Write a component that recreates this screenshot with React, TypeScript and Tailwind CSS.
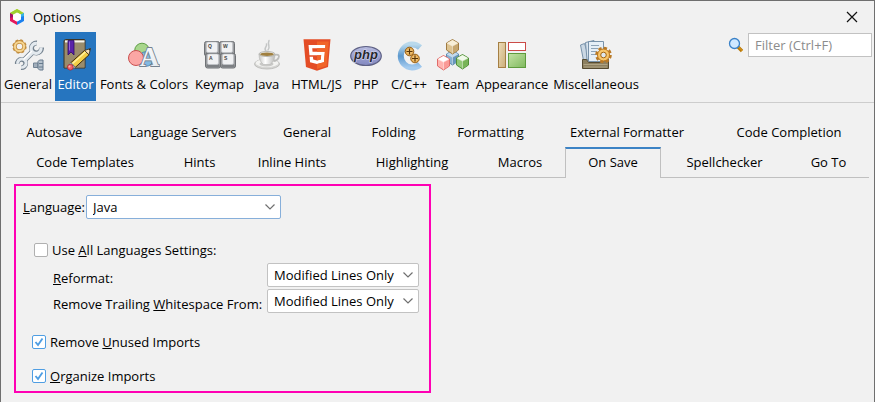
import { useState, type ReactNode } from "react";
import { FaHtml5 } from "react-icons/fa6";

function Logo() {
  return (
    <svg viewBox="0 0 16 16" className="size-4">
      <path d="M8 0 15 4v8L8 16 1 12V4Z" fill="#fff" />
      <path d="M1 12V4l3 1.700v4.600L8 12.500V16Z" fill="#e4195c" />
      <path d="M1 4 8 0l3.500 2L5 6Z" fill="#b5d82b" />
      <path d="m8 0 7 4-3 1.700L8 3.500 4 5.700 1 4Z" fill="#9fd02f" />
      <path d="M15 4v8l-7 4v-3.500l4-2.200V5.700Z" fill="#1b80ee" />
      <path d="M1 4v5l3-1V5.700Z" fill="#a01468" />
      <path d="m12 5.700 3-1.700v3l-3 1Z" fill="#35b3e4" />
      <path d="m8 3.500 4 2.200v4.600l-4 2.200-4-2.200V5.700Z" fill="#fff" />
    </svg>
  );
}

function GeneralIcon() {
  return (
    <svg viewBox="0 0 32 32" className="size-8">
      <circle cx="7.500" cy="7.500" r="6.200" fill="none" stroke="#c4934a" strokeWidth="2" strokeDasharray="2.700 2.170" />
      <circle cx="7.500" cy="7.500" r="4.600" fill="none" stroke="#c28c3c" strokeWidth="3.600" />
      <circle cx="7.500" cy="7.500" r="4.600" fill="none" stroke="#f6d591" strokeWidth="2" />
      <g fill="none" stroke="#74828f">
        <path d="M29.500 8.600A5 5 0 1 1 24.900 4" strokeWidth="5" />
        <path d="M5.300 24.900A4.200 4.200 0 1 1 9.100 28.700" strokeWidth="4.800" />
        <path d="m21 12.500-8.500 8.500" strokeWidth="5.800" />
      </g>
      <g fill="none" stroke="#e3e9ee">
        <path d="M29 8.600A5 5 0 1 1 24.900 4.500" strokeWidth="3.200" />
        <path d="M5.800 24.900A4.200 4.200 0 1 1 9.100 28.200" strokeWidth="3" />
        <path d="m21 12.500-8.500 8.500" strokeWidth="4" />
      </g>
      <path d="m20 12-8.500 8.500" stroke="#fff" strokeWidth="1.300" />
      <path d="M21.500 24h4.500v4.500h-4.500Z" fill="#c4ced8" stroke="#708293" />
      <path d="M23 24v4.500M25 24v4.500" stroke="#708293" strokeWidth=".8" />
      <path d="m26 22.500 1.500-1.500H31v10h-3.500L26 29.500Z" fill="#b6c2cd" stroke="#65798c" />
      <path d="M27 24.500h4M27 28h4" stroke="#65798c" />
    </svg>
  );
}

function EditorIcon() {
  return (
    <svg viewBox="0 0 32 32" className="size-8">
      <path d="M4 1.500 5.500.5h19l.5 1V29H4Z" fill="#8d8062" stroke="#3e3424" />
      <path d="M5 1.500h19.500v2H5Z" fill="#f7f5ee" />
      <path d="M5 4h19.500v24.500H5Z" fill="#9a8c6c" />
      <path d="M4.500 4v24.500" stroke="#6a5d43" />
      <path d="M8 1.500h6V16l-3-3-3 3Z" fill="#5a22a8" stroke="#2e0b68" strokeWidth=".8" />
      <path d="M9.500 2.500v9" stroke="#9a66dc" />
      <path d="m10.500 24 14-12.500 4.500 4.300-13.800 12.700Z" fill="#f3cf47" stroke="#3e2c0e" />
      <path d="m12 25 14-12.500" stroke="#fff1a0" strokeWidth="1.500" />
      <path d="m24.500 11.500 6-2-1.500 6.300Z" fill="#f7dfb4" stroke="#3e2c0e" strokeWidth=".8" />
      <path d="m28.500 10.200 2-.7-.6 2.200Z" fill="#222" />
      <path d="m9.300 25 1.600-1.400 4.500 4.600-1.600 1.400Z" fill="#bccbda" stroke="#5b6976" strokeWidth=".8" />
      <circle cx="10.300" cy="28.200" r="2.900" fill="#f0636b" stroke="#a72834" strokeWidth=".8" />
      <circle cx="9.500" cy="27.500" r="1" fill="#ffb7b8" />
    </svg>
  );
}

function FontsIcon() {
  return (
    <svg viewBox="0 0 32 32" className="size-8">
      <defs>
        <linearGradient id="fontFace" x1="0" y1="0" x2="1" y2="1">
          <stop offset="0" stopColor="#fff" />
          <stop offset="1" stopColor="#e2e8ee" />
        </linearGradient>
      </defs>
      <circle cx="14" cy="11.500" r="7.300" fill="#a8d68c" stroke="#5f9e47" />
      <circle cx="18" cy="20" r="7.300" fill="#82b9e2" stroke="#4c88b5" />
      <circle cx="8" cy="19" r="7.500" fill="#fba6a4" stroke="#c9504f" />
      <text x="21.500" y="26.500" textAnchor="middle" fontFamily="Liberation Serif, serif" fontWeight="700" fontSize="27" fill="url(#fontFace)" stroke="#75828f" strokeWidth="1.800" paintOrder="stroke">
        A
      </text>
    </svg>
  );
}

function Key({ x, y, label }: { x: number; y: number; label: string }) {
  return (
    <g transform={`translate(${x} ${y})`}>
      <rect x=".5" y=".5" width="15" height="14.500" rx="2" fill="#9c9ea1" stroke="#6f7276" />
      <path d="M1.500 12 3.500 10.500h9l2 1.500v2h-13Z" fill="#7d8084" />
      <rect x="2.500" y="1" width="11" height="10.500" rx="1.500" fill="#f0f1f3" stroke="#c2c4c8" strokeWidth=".7" />
      <text x="4" y="7" fontFamily="Liberation Sans, sans-serif" fontWeight="700" fontSize="5" fill="#444">
        {label}
      </text>
    </g>
  );
}

function KeymapIcon() {
  return (
    <svg viewBox="0 0 32 32" className="size-8">
      <Key x={0} y={2} label="Q" />
      <Key x={15} y={2} label="W" />
      <Key x={1} y={14} label="A" />
      <Key x={16} y={14} label="S" />
    </svg>
  );
}

function JavaIcon() {
  return (
    <svg viewBox="0 0 32 32" className="size-8">
      <defs>
        <linearGradient id="cup" x1="0" x2="1">
          <stop offset="0" stopColor="#c9c9c7" />
          <stop offset=".4" stopColor="#fff" />
          <stop offset="1" stopColor="#b9b9b7" />
        </linearGradient>
      </defs>
      <ellipse cx="16" cy="25" rx="12.500" ry="5" fill="#d5d5d3" stroke="#b5b5b3" strokeWidth=".8" />
      <ellipse cx="16" cy="24" rx="11.500" ry="4" fill="#f3f3f1" />
      <ellipse cx="15.500" cy="25" rx="7" ry="2.500" fill="#c9c9c7" />
      <path d="M24 16c4-1 4.500 1 3.500 3s-3 3-5 3" fill="none" stroke="#bdbdbb" strokeWidth="1.800" />
      <path d="M8 15c0 5 1.500 8.500 4.500 10.500h6.500c3-2 5-5.500 5-10.500Z" fill="url(#cup)" stroke="#b4b4b2" strokeWidth=".6" />
      <ellipse cx="16" cy="15" rx="8" ry="2.500" fill="#eeeeec" stroke="#aaa9a5" strokeWidth=".8" />
      <ellipse cx="16" cy="15.300" rx="6.800" ry="1.700" fill="#a08040" />
      <path d="M15 12c-3-3 1.500-4 .5-7M17 11c3-3-1-5 1-9.500" fill="none" stroke="#c3c5c5" strokeWidth="1.500" strokeLinecap="round" />
    </svg>
  );
}

function HtmlIcon() {
  return (
    <svg viewBox="0 0 32 32" className="size-8">
      <defs>
        <clipPath id="shieldHalf">
          <path d="M16 2.500h11.800L25.700 27 16 30Z" />
        </clipPath>
      </defs>
      <path d="M7 6h18l-2 18-7 3-7-3Z" fill="#fff" />
      <FaHtml5 x="-2" y="-2" size={36} color="#e44d26" />
      <g clipPath="url(#shieldHalf)">
        <FaHtml5 x="-2" y="-2" size={36} color="#f16529" />
      </g>
    </svg>
  );
}

function PhpIcon() {
  return (
    <svg viewBox="0 0 32 32" className="size-8">
      <defs>
        <linearGradient id="oval" x1="0" y1="0" x2="0" y2="1">
          <stop offset="0" stopColor="#b8bce0" />
          <stop offset="1" stopColor="#8288c0" />
        </linearGradient>
      </defs>
      <ellipse cx="16" cy="17" rx="15.300" ry="9.500" fill="url(#oval)" stroke="#5d6084" strokeWidth="1.200" />
      <text x="16" y="20" textAnchor="middle" fontFamily="Liberation Sans, sans-serif" fontStyle="italic" fontWeight="700" fontSize="13" fill="#26262e" stroke="#d8daf0" strokeWidth="1.200" paintOrder="stroke">
        php
      </text>
    </svg>
  );
}

function CIcon() {
  return (
    <svg viewBox="0 0 32 32" className="size-8">
      <defs>
        <linearGradient id="ring" x1="0" y1="0" x2="0" y2="1">
          <stop offset="0" stopColor="#b9d9ec" />
          <stop offset=".5" stopColor="#5c98cd" />
          <stop offset="1" stopColor="#a4cbef" />
        </linearGradient>
        <radialGradient id="bolt">
          <stop offset="0" stopColor="#ffe09c" />
          <stop offset="1" stopColor="#e0a044" />
        </radialGradient>
      </defs>
      <path d="M27 8.500A11.500 11.500 0 1 0 27 25.500" fill="none" stroke="url(#ring)" strokeWidth="6" />
      <g fill="url(#bolt)" stroke="#8d570c" strokeWidth=".9">
        <circle cx="16.500" cy="12.500" r="4.300" />
        <circle cx="22" cy="19.500" r="4.300" />
      </g>
      <path d="M16.500 9.500v6M13.500 12.500h6M22 16.500v6M19 19.500h6" stroke="#593404" strokeWidth="1.200" />
    </svg>
  );
}

function Cube({ x, y, top, left, right, line }: { x: number; y: number; top: string; left: string; right: string; line: string }) {
  return (
    <g transform={`translate(${x} ${y})`} stroke={line} strokeLinejoin="round">
      <path d="m6.500.5 6 3.500v7l-6 4-6-4V4Z" fill={left} />
      <path d="m6.500 1 5.500 3-5.500 3L1 4Z" fill={top} stroke="none" />
      <path d="m12 4.200-5.500 3v7.200L12 10.800Z" fill={right} stroke="none" />
      <path d="m1 4.200 5.500 3 5.500-3M6.500 7.200v7.300" fill="none" stroke="#fff" strokeOpacity=".6" strokeWidth=".7" />
    </g>
  );
}

function TeamIcon() {
  return (
    <svg viewBox="0 0 32 32" className="size-8">
      <Cube x={9} y={11} top="#c1d9ed" left="#88b1d2" right="#6896bb" line="#5f8bb0" />
      <Cube x={9} y={0} top="#f8efd7" left="#ddc391" right="#c6a66e" line="#a07c42" />
      <Cube x={0} y={16} top="#fff" left="#ffb4b0" right="#fa9a96" line="#e06c69" />
      <Cube x={19} y={15} top="#f1f9ea" left="#93c978" right="#78b458" line="#53903a" />
    </svg>
  );
}

function AppearanceIcon() {
  return (
    <svg viewBox="0 0 32 32" className="size-8">
      <defs>
        <linearGradient id="paneTan" x1="0" y1="0" x2="1" y2="1">
          <stop offset="0" stopColor="#eddcb7" />
          <stop offset="1" stopColor="#cbae7a" />
        </linearGradient>
        <linearGradient id="paneGreen" x1="0" y1="0" x2="1" y2="1">
          <stop offset="0" stopColor="#c4e3a5" />
          <stop offset="1" stopColor="#7fb95e" />
        </linearGradient>
      </defs>
      <rect x="2.500" y="3.500" width="7" height="25" fill="url(#paneTan)" stroke="#a57f43" />
      <rect x="12.500" y="3.500" width="17" height="8" fill="#fff" stroke="#cb4b47" />
      <rect x="12.500" y="14.500" width="17" height="14" fill="url(#paneGreen)" stroke="#5e9b3d" />
    </svg>
  );
}

function MiscIcon() {
  return (
    <svg viewBox="0 0 32 32" className="size-8">
      <path d="m.5 6 4-1.500 5 16-6 1Z" fill="#cbd8e4" stroke="#7892aa" />
      <path d="M5.500 3.500 14 1.500v19H7Z" fill="#d9e4ee" stroke="#7892aa" />
      <path d="M8.500 2.500h15v20h-15Z" fill="#e6eff7" stroke="#7892aa" />
      <path d="M11 6.500h8M11 9.500h7M11 12.500h5M11 15.500h5" stroke="#8ea4b8" />
      <path d="M2.500 20.500h4l2 3h12l2-3h6v9h-26Z" fill="#8d8060" stroke="#554a30" />
      <path d="M3.500 25.500h24M4 28h23" stroke="#afa383" />
      <circle cx="23.500" cy="16" r="7" fill="none" stroke="#b97a28" strokeWidth="2.600" strokeDasharray="3.300 2.200" />
      <circle cx="23.500" cy="16" r="6" fill="#f8c66c" stroke="#bb7418" />
      <circle cx="23.500" cy="16" r="2.800" fill="#dfe8f0" stroke="#a4650f" />
    </svg>
  );
}

function SearchIcon() {
  return (
    <svg viewBox="0 0 16 16" className="size-4">
      <path d="m9.500 9.500 4.500 4.500" stroke="#b77605" strokeWidth="3.200" />
      <path d="m10 9.500 4.500 4.500" stroke="#e3a125" strokeWidth="1" />
      <circle cx="6.500" cy="6.500" r="5" fill="#cfe8ff" stroke="#3b82c8" strokeWidth="1.300" />
    </svg>
  );
}

const categories: { label: string; icon: ReactNode }[] = [
  { label: "General", icon: <GeneralIcon /> },
  { label: "Editor", icon: <EditorIcon /> },
  { label: "Fonts & Colors", icon: <FontsIcon /> },
  { label: "Keymap", icon: <KeymapIcon /> },
  { label: "Java", icon: <JavaIcon /> },
  { label: "HTML/JS", icon: <HtmlIcon /> },
  { label: "PHP", icon: <PhpIcon /> },
  { label: "C/C++", icon: <CIcon /> },
  { label: "Team", icon: <TeamIcon /> },
  { label: "Appearance", icon: <AppearanceIcon /> },
  { label: "Miscellaneous", icon: <MiscIcon /> },
];

const upperTabs = ["Autosave", "Language Servers", "General", "Folding", "Formatting", "External Formatter", "Code Completion"];
const lowerTabs = ["Code Templates", "Hints", "Inline Hints", "Highlighting", "Macros", "On Save", "Spellchecker", "Go To"];

function Tab({ label, active, onSelect }: { label: string; active: boolean; onSelect: () => void }) {
  return (
    <button
      type="button"
      role="tab"
      aria-selected={active}
      onClick={onSelect}
      className={
        "whitespace-nowrap border-x border-t-2 text-center " +
        (active ? "-mb-px border-x-[#c0c0c0] border-t-[#3c83c5] bg-[#f1f1f1] pb-[3px]" : "border-transparent pb-0.5")
      }
    >
      {label}
    </button>
  );
}

function Select({ id, options, focused, className }: { id: string; options: string[]; focused?: boolean; className: string }) {
  return (
    <div className={"relative " + className}>
      <select
        id={id}
        className={
          "h-6 w-full appearance-none rounded-xs border bg-white pl-1.5 pr-5 outline-none " +
          (focused ? "border-[#87afda]" : "border-[#c2c2c2]")
        }
      >
        {options.map((o) => (
          <option key={o}>{o}</option>
        ))}
      </select>
      <svg viewBox="0 0 10 6" className="pointer-events-none absolute right-1.5 top-[9px] h-1.5 w-2.5">
        <path d="m.5.500 4.500 4.500L9.500.5" fill="none" stroke="#707070" strokeWidth="1.200" />
      </svg>
    </div>
  );
}

function Check({ children, checked }: { children: ReactNode; checked?: boolean }) {
  return (
    <label className="flex items-center gap-1">
      <span className="relative flex size-3.5">
        <input
          type="checkbox"
          defaultChecked={checked}
          className="peer size-3.5 appearance-none rounded-xs border border-[#b0b0b0] bg-white checked:border-[#4f9ee3]"
        />
        <svg viewBox="0 0 14 14" className="pointer-events-none absolute inset-0 hidden size-3.5 peer-checked:block">
          <path d="m3.500 7 2.500 3L10.500 3.500" fill="none" stroke="#4f9ee3" strokeWidth="1.900" />
        </svg>
      </span>
      <span>{children}</span>
    </label>
  );
}

export default function App() {
  const [category, setCategory] = useState("Editor");
  const [tab, setTab] = useState("On Save");
  const scopes = ["Modified Lines Only", "All Lines", "None"];

  return (
    <main className="flex min-h-screen flex-col border-x border-t border-[#6f6f6f] bg-[#f1f1f1] font-['Open_Sans',sans-serif] text-[13px] leading-4 text-black">
      <header className="flex h-[31px] items-center pl-2 pr-3">
        <Logo />
        <h1 className="ml-2 flex-1">Options</h1>
        <button type="button" aria-label="Close" className="p-1">
          <svg viewBox="0 0 12 12" className="size-3">
            <path d="m1 1 10 10M11 1 1 11" stroke="#111" strokeWidth="1.200" />
          </svg>
        </button>
      </header>

      <div className="flex items-start justify-between border-b border-[#cdcdcd] pr-0.5">
        <nav className="grid grid-cols-[54px_41px_96px_55px_40px_59px_40px_46px_41px_78px_90px] pb-px">
          {categories.map((c) => (
            <button
              type="button"
              key={c.label}
              onClick={() => setCategory(c.label)}
              className={
                "flex h-[69px] flex-col items-center gap-[5px] whitespace-nowrap pt-[7px] " +
                (category === c.label ? "bg-[#2675bf] text-white" : "")
              }
            >
              {c.icon}
              {c.label}
            </button>
          ))}
        </nav>
        <div className="flex items-start gap-1 pt-px">
          <span className="pt-1">
            <SearchIcon />
          </span>
          <input
            type="text"
            aria-label="Filter"
            placeholder="Filter (Ctrl+F)"
            className="h-6 w-[124px] border border-[#c2c2c2] bg-white px-1.5 outline-none placeholder:text-[#8c8c8c]"
          />
        </div>
      </div>

      <div role="tablist" className="mx-[5px] mt-3.5 border-b border-[#c0c0c0]">
        <div className="grid h-[30px] grid-cols-[97fr_160fr_88fr_85fr_109fr_164fr_160fr]">
          {upperTabs.map((t) => (
            <Tab key={t} label={t} active={tab === t} onSelect={() => setTab(t)} />
          ))}
        </div>
        <div className="grid h-[30px] grid-cols-[158fr_71fr_114fr_126fr_90fr_96fr_127fr_81fr]">
          {lowerTabs.map((t) => (
            <Tab key={t} label={t} active={tab === t} onSelect={() => setTab(t)} />
          ))}
        </div>
      </div>

      <section className="ml-[13px] mt-1.5 w-[417px] border-2 border-[#ff00b4] pb-[7px] pl-[7px] pt-[9px]">
        <div className="flex items-center">
          <label htmlFor="language" className="w-[63px] whitespace-nowrap">
            <u>L</u>anguage:
          </label>
          <Select id="language" options={["Java", "All Languages"]} focused className="w-[195px]" />
        </div>

        <div className="mt-[23px] pl-[11px]">
          <Check>
            Use <u>A</u>ll Languages Settings:
          </Check>
          <div className="mt-[5px] grid grid-cols-[214px_152px] items-center gap-y-0.5 pl-[19px]">
            <label htmlFor="reformat" className="pt-1.5">
              <u>R</u>eformat:
            </label>
            <Select id="reformat" options={scopes} className="w-[152px]" />
            <label htmlFor="whitespace" className="whitespace-nowrap pt-1.5">
              Remove Trailing <u>W</u>hitespace From:
            </label>
            <Select id="whitespace" options={scopes} className="w-[152px]" />
          </div>
        </div>

        <div className="mt-[21px] flex flex-col gap-[18px] pl-[9px]">
          <Check checked>
            Remove <u>U</u>nused Imports
          </Check>
          <Check checked>
            <u>O</u>rganize Imports
          </Check>
        </div>
      </section>
    </main>
  );
}
